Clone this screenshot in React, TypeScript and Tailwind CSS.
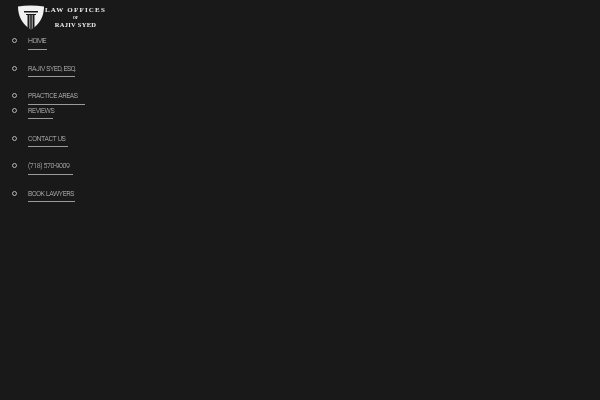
const navItems = [
  { label: "HOME", width: "w-[19px]", gap: "mb-[13.2px]" },
  { label: "RAJIV SYED, ESQ.", width: "w-[47px]", gap: "mb-[13.2px]" },
  { label: "PRACTICE AREAS", width: "w-[57px]", gap: "mb-0" },
  { label: "REVIEWS", width: "w-[25px]", gap: "mb-[13.2px]" },
  { label: "CONTACT US", width: "w-[40px]", gap: "mb-[13.2px]" },
  { label: "(718) 570-9009", width: "w-[45px]", gap: "mb-[13.2px]" },
  { label: "BOOK LAWYERS", width: "w-[47px]", gap: "mb-0" },
];

function Logo() {
  return (
    <div className="flex h-[32px] pl-[18px] pt-[5px] will-change-transform">
      <svg width="26" height="25" viewBox="0 0 26 25" className="shrink-0">
        <path d="M0 1.5 C8 0 17 0 26 1.5 C26 12 21 20 13 24.5 C5 20 0 12 0 1.5 Z" fill="#f2f2f2" />
        <path d="M6 6 H20 V7.5 H6 Z" fill="#1a1a1a" />
        <path d="M8 9 H18 V10 H8 Z" fill="#1a1a1a" />
        <path d="M9.5 10 H11.5 V24 L9.5 23 Z M12.2 10 H13.8 V24.5 H12.2 Z M14.5 10 H16.5 V23 L14.5 24 Z" fill="#1a1a1a" />
      </svg>
      <div className="ml-[1px] flex w-[61px] flex-col items-center text-[#eeeeee] font-['Liberation_Serif',serif] font-bold leading-none">
        <span className="mt-[1.5px] whitespace-nowrap text-[7px] tracking-[1.2px]">LAW OFFICES</span>
        <span className="mt-[2px] text-[4px]">OF</span>
        <span className="mt-[2px] whitespace-nowrap text-[6.5px] tracking-[0.3px]">RAJIV SYED</span>
      </div>
    </div>
  );
}

export default function App() {
  return (
    <div className="h-[400px] w-[600px] overflow-hidden bg-[#191919] font-['Roboto',sans-serif]">
      <Logo />
      <ul className="pt-[3px] will-change-transform">
        {navItems.map((item) => (
          <li key={item.label} className={`flex items-start pl-[12px] ${item.gap}`}>
            <span className="mt-[3px] h-[5px] w-[5px] rounded-full border border-[#b5b5b5]" />
            <a className="ml-[11px] flex flex-col text-[#c8c8c8]">
              <span className="h-[13.5px] whitespace-nowrap text-[7px] font-light leading-[12px] tracking-[-0.4px]">{item.label}</span>
              <span className={`h-px bg-[#9a9a9a] ${item.width}`} />
            </a>
          </li>
        ))}
      </ul>
    </div>
  );
}
